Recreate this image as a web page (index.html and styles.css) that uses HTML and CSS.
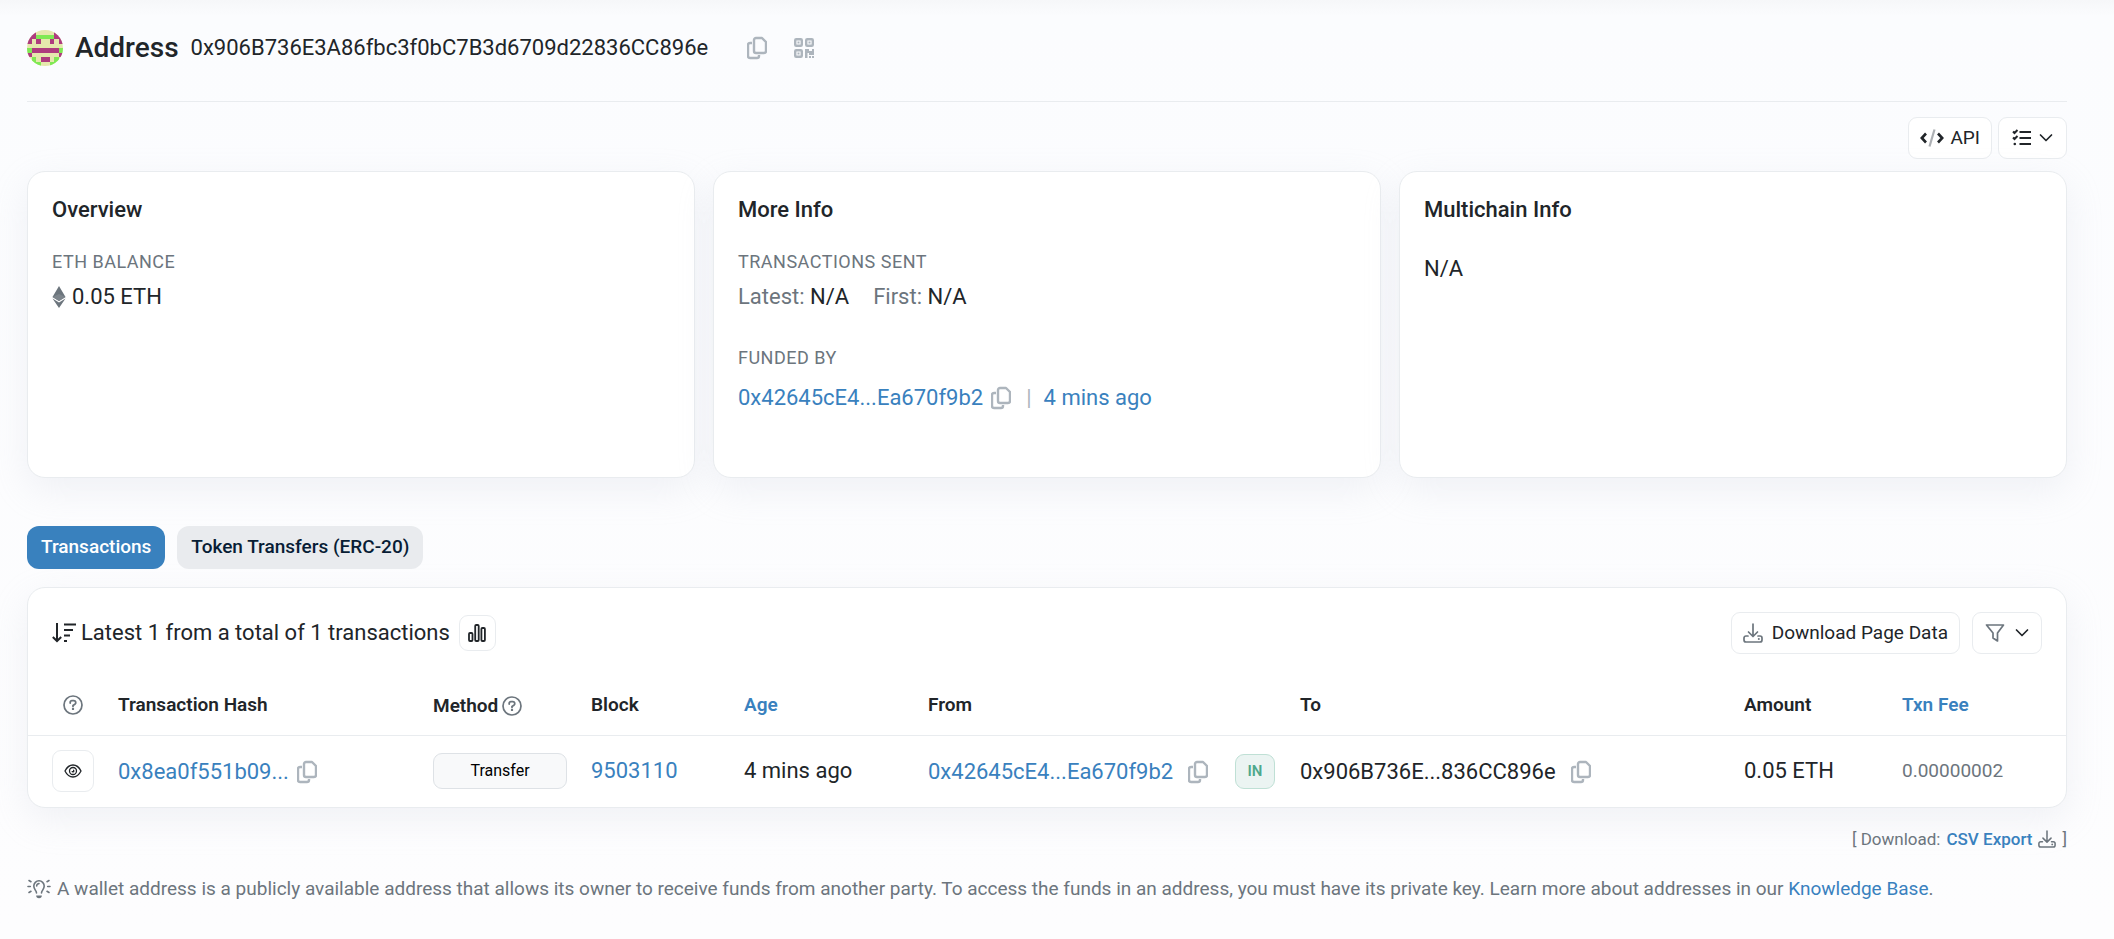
FILE: index.html
```html
<!DOCTYPE html>
<html lang="en">
<head>
<meta charset="utf-8">
<title>Address 0x906B736E3A86fbc3f0bC7B3d6709d22836CC896e</title>
<link rel="stylesheet" href="styles.css">
</head>
<body>
<svg class="sprite" aria-hidden="true">
  <symbol id="copy" viewBox="0 0 20 24"><g fill="none" stroke="currentColor" stroke-width="2.4" stroke-linejoin="round"><path d="M9 2h6l4 4v9a2 2 0 0 1-2 2H9a2 2 0 0 1-2-2V4a2 2 0 0 1 2-2z"/><path d="M5 7H3a2 2 0 0 0-2 2v11a2 2 0 0 0 2 2h7a2 2 0 0 0 2-2v-1"/></g></symbol>
  <symbol id="help" viewBox="0 0 20 20"><circle cx="10" cy="10" r="9" fill="none" stroke="currentColor" stroke-width="1.7"/><path d="M7.2 8V7.4A1.7 1.7 0 0 1 8.9 5.700h2A1.900 1.900 0 0 1 11.900 9.200L10 10.400v1" fill="none" stroke="currentColor" stroke-width="1.8" stroke-linecap="round"/><circle cx="10" cy="13.900" r="1.200" fill="currentColor"/></symbol>
  <symbol id="download" viewBox="0 0 20 20"><g fill="none" stroke="currentColor" stroke-width="1.7" stroke-linecap="round" stroke-linejoin="round"><path d="M10 1v12M5.500 9l4.500 4.500L14.500 9"/><path d="M5 13H3a2 2 0 0 0-2 2v2a2 2 0 0 0 2 2h14a2 2 0 0 0 2-2v-2a2 2 0 0 0-2-2h-2"/></g><circle cx="15.800" cy="16" r="1" fill="currentColor"/></symbol>
  <symbol id="chevron" viewBox="0 0 14 10"><path d="M1.500 2L7 7.500 12.500 2" fill="none" stroke="currentColor" stroke-width="1.700" stroke-linecap="round" stroke-linejoin="round"/></symbol>
</svg>
<main class="page">
  <header class="title-bar">
    <svg class="avatar" viewBox="0 0 8 8" shape-rendering="crispEdges" aria-hidden="true">
      <path fill="#e5e8ad" d="M0 0h8v8H0z"/>
      <path fill="#ae3c7e" d="M1 0h1v1H1zM6 0h1v1H6zM0 1h2v1H0zM6 1h2v1H6zM0 2h1v1H0zM2 2h1v1H2zM5 2h1v1H5zM7 2h1v1H7zM1 4h6v1H1zM0 5h1v1H0zM7 5h1v1H7zM3 6h2v1H3z"/>
      <path fill="#7fe954" d="M2 1h4v1H2zM0 4h1v1H0zM7 4h1v1H7zM1 6h1v1H1zM6 6h1v1H6zM1 7h2v1H1zM5 7h2v1H5z"/>
    </svg>
    <h1>Address</h1>
    <span class="address">0x906B736E3A86fbc3f0bC7B3d6709d22836CC896e</span>
    <button class="icon-button" aria-label="Copy address"><svg class="copy"><use href="#copy"/></svg></button>
    <button class="icon-button" aria-label="Show QR code"><svg class="qr" viewBox="0 0 20 20"><g fill="none" stroke="currentColor" stroke-width="2.400"><rect x="1.200" y="1.200" width="6.600" height="6.600" rx="1"/><rect x="12.200" y="1.200" width="6.600" height="6.600" rx="1"/><rect x="1.200" y="12.200" width="6.600" height="6.600" rx="1"/></g><path fill="currentColor" d="M3.500 3.500h2v2h-2zM14.500 3.500h2v2h-2zM3.500 14.500h2v2h-2zM11 11h4v2h3v-2h2v6h-5v-2h-1.500v5H11zM15 18h2v2h-2zM18 18h2v2h-2z"/></svg></button>
  </header>

  <div class="toolbar">
    <a class="button api-button" href="#api"><svg class="code" viewBox="0 0 24 20"><path d="M6 5.500L1.800 10 6 14.500M18 5.500l4.200 4.500-4.200 4.500" fill="none" stroke="currentColor" stroke-width="2.600"/><path d="M14.500 1.500l-5 17" stroke="#adb0b4" stroke-width="2.200"/></svg>API</a>
    <button class="button list-button" aria-label="More options"><svg class="list" viewBox="0 0 20 18"><path d="M7.500 3H19M7.500 9H19M7.500 15H19M1 2.500L2.500 4l3-3M1 8.500L2.500 10l3-3" fill="none" stroke="currentColor" stroke-width="2"/><circle cx="2.800" cy="15" r="1.300" fill="currentColor"/></svg><svg class="chevron"><use href="#chevron"/></svg></button>
  </div>

  <section class="cards">
    <article class="card info">
      <h2>Overview</h2>
      <h3>ETH Balance</h3>
      <p class="value"><svg class="eth" viewBox="0 0 14 22"><path fill="#6c757d" d="M7 0l6.500 11L7 15 .5 11zM.500 12.600L7 16.500l6.500-3.900L7 22z"/><path fill="#7d858c" d="M7 8l6.500 3L7 15 .5 11z"/></svg>0.05 ETH</p>
    </article>
    <article class="card info">
      <h2>More Info</h2>
      <h3>Transactions Sent</h3>
      <p class="value sent"><span><span class="muted">Latest:</span> N/A</span><span><span class="muted">First:</span> N/A</span></p>
      <h3 class="funded-title">Funded By</h3>
      <p class="value funded"><a href="#funder">0x42645cE4...Ea670f9b2</a><button class="icon-button" aria-label="Copy funder address"><svg class="copy"><use href="#copy"/></svg></button><span class="bar">|</span><a href="#funding-tx">4 mins ago</a></p>
    </article>
    <article class="card info">
      <h2>Multichain Info</h2>
      <p class="value multichain">N/A</p>
    </article>
  </section>

  <nav class="tabs">
    <button class="tab active">Transactions</button>
    <button class="tab">Token Transfers (ERC-20)</button>
  </nav>

  <section class="card transactions">
    <div class="list-head">
      <svg class="sort" viewBox="0 0 24 20"><path d="M5 0v18M.800 14l4.200 4 4.200-4M12 1.500h12M12 7h9M12 12.500h6M12 18h3" fill="none" stroke="currentColor" stroke-width="2"/></svg>
      <p>Latest 1 from a total of 1 transactions</p>
      <button class="button chart-button" aria-label="Show chart"><svg class="bars" viewBox="0 0 18 18"><g fill="none" stroke="currentColor" stroke-width="1.800"><rect x="1" y="9" width="3.500" height="8" rx="1"/><rect x="7.200" y="1" width="3.500" height="16" rx="1"/><rect x="13.400" y="4" width="3.500" height="13" rx="1"/></g></svg></button>
      <button class="button download-button"><svg class="download"><use href="#download"/></svg>Download Page Data</button>
      <button class="button filter-button" aria-label="Filter"><svg class="filter" viewBox="0 0 20 18"><path d="M1.500 1h17L12.500 9v8L8 14V9z" fill="none" stroke="currentColor" stroke-width="1.700" stroke-linejoin="round"/></svg><svg class="chevron"><use href="#chevron"/></svg></button>
    </div>
    <table>
      <colgroup><col class="c-eye"><col class="c-hash"><col class="c-method"><col class="c-block"><col class="c-age"><col class="c-from"><col class="c-dir"><col class="c-to"><col class="c-amount"><col class="c-fee"></colgroup>
      <thead><tr>
        <th class="eye-cell"><svg class="help"><use href="#help"/></svg></th><th>Transaction Hash</th><th><span class="inline">Method<svg class="help"><use href="#help"/></svg></span></th><th>Block</th><th><a href="#age">Age</a></th><th>From</th><th></th><th>To</th><th>Amount</th><th><a href="#fee">Txn Fee</a></th>
      </tr></thead>
      <tbody><tr>
        <td class="eye-cell"><button class="button eye-button" aria-label="Preview transaction"><svg class="eye" viewBox="0 0 18 16"><g fill="none" stroke="currentColor" stroke-width="1.300"><path d="M1 8c2-4 4.800-6 8-6s6 2 8 6c-2 4-4.800 6-8 6s-6-2-8-6z"/><circle cx="9" cy="8" r="3.500"/></g><path d="M9 6.500a1.500 1.500 0 1 1-1.500 1.500h1.500z" fill="currentColor"/></svg></button></td>
        <td><span class="inline hash"><a href="#tx">0x8ea0f551b09...</a><button class="icon-button" aria-label="Copy hash"><svg class="copy"><use href="#copy"/></svg></button></span></td>
        <td><span class="method">Transfer</span></td>
        <td><a href="#block">9503110</a></td>
        <td>4 mins ago</td>
        <td><span class="inline wide"><a href="#from">0x42645cE4...Ea670f9b2</a><button class="icon-button" aria-label="Copy sender"><svg class="copy"><use href="#copy"/></svg></button></span></td>
        <td><span class="direction">IN</span></td>
        <td><span class="inline wide">0x906B736E...836CC896e<button class="icon-button" aria-label="Copy recipient"><svg class="copy"><use href="#copy"/></svg></button></span></td>
        <td>0.05 ETH</td>
        <td class="fee">0.00000002</td>
      </tr></tbody>
    </table>
  </section>

  <p class="export">[ Download: <a href="#csv">CSV Export</a> <svg class="download"><use href="#download"/></svg> ]</p>
  <footer class="note">
    <svg class="bulb" viewBox="0 0 24 20"><g fill="none" stroke="currentColor" stroke-width="1.600" stroke-linecap="round"><path d="M9.500 14c0-2.500-2.700-3.500-2.700-7a5.200 5.200 0 0 1 10.400 0c0 3.500-2.700 4.500-2.700 7M9.700 7A2.300 2.300 0 0 1 12 4.600M1 7.500h2.300M20.700 7.500H23M2 1.500l2 1.200M22 1.500l-2 1.200M2 13.500l2-1.200M22 13.500l-2-1.200"/></g><path d="M9.200 16.500h5.600a2.800 2.800 0 0 1-5.600 0z" fill="currentColor"/></svg>
    <p>A wallet address is a publicly available address that allows its owner to receive funds from another party. To access the funds in an address, you must have its private key. Learn more about addresses in our <a href="#kb">Knowledge Base</a>.</p>
  </footer>
</main>
</body>
</html>
```

FILE: styles.css
```css
* { box-sizing: border-box; }
body {
  margin: 0;
  background: #fdfdfe linear-gradient(#f6f7f9, #fbfcfe 16px, #fdfdfe) no-repeat;
  color: #212529;
  font: 22px/32px Roboto, "Liberation Sans", sans-serif;
}
h1, h2, h3, p { margin: 0; }
a { color: #3981be; text-decoration: none; }
button { font: inherit; color: inherit; cursor: pointer; }
svg { display: block; flex: none; }
.sprite { display: none; }
.page { padding: 0 47px 0 27px; }

.title-bar { display: flex; align-items: center; height: 102px; padding-bottom: 6px; border-bottom: 1px solid #e9ecef; }
.avatar { width: 36px; height: 36px; margin-right: 12px; border-radius: 50%; }
h1 { margin-right: 12px; font-size: 28px; font-weight: 500; }
.address { margin-right: 12px; }
.icon-button { display: inline-flex; padding: 0; border: 0; background: none; color: #adb5bd; }
.title-bar .icon-button { margin-left: 27px; }
.copy { width: 20px; height: 24px; }
.qr { width: 20px; height: 20px; }

.toolbar { display: flex; justify-content: flex-end; gap: 6px; margin: 15px 0 12px; }
.button { display: inline-flex; align-items: center; justify-content: center; height: 42px; padding: 0 12px; border: 1px solid #e9ecef; border-radius: 9px; background: #fff; color: #212529; font-size: 19px; }
.api-button { padding: 0 11px; }
.code { width: 24px; height: 20px; margin-right: 6px; }
.list { width: 20px; height: 18px; margin-right: 7px; }
.chevron { width: 14px; height: 10px; }
.list-button { padding: 0 13px; }

.card { border: 1px solid #e9ecef; border-radius: 18px; background: #fff; box-shadow: 0 12px 36px rgba(189, 197, 209, 0.2); }
.cards { display: grid; grid-template-columns: repeat(3, 1fr); gap: 18px; }
.info { min-height: 307px; padding: 22px 24px; }
h2 { font-size: 22px; font-weight: 500; }
h3 { margin-top: 22px; font-size: 18px; line-height: 28px; font-weight: 400; letter-spacing: 0.5px; text-transform: uppercase; color: #6c757d; }
.value { display: flex; align-items: center; margin-top: 5px; }
.eth { width: 14px; height: 22px; margin-right: 6px; }
.muted { color: #6c757d; }
.sent { gap: 24px; }
.funded-title { margin-top: 31px; }
.funded { margin-top: 10px; }
.funded .copy { margin: 0 15px 0 8px; }
.bar { margin-right: 12px; color: #adb5bd; }
.multichain { margin-top: 27px; }

.tabs { display: flex; gap: 12px; margin: 48px 0 18px; }
.tab { height: 43px; padding: 0 14px 1px; border: 0; border-radius: 12px; background: #e9ebee; color: #081d35; font-size: 19px; font-weight: 500; }
.tab.active { background: #3981be; color: #fff; }

.list-head { display: flex; align-items: center; padding: 24px 24px 0; }
.sort { width: 24px; height: 20px; margin-right: 5px; }
.chart-button { width: 37px; height: 36px; margin: 0 auto 0 9px; padding: 0; }
.bars { width: 18px; height: 18px; }
.download { width: 20px; height: 20px; color: #6c757d; }
.download-button { padding: 0 11px; }
.download-button .download { margin-right: 9px; }
.filter { width: 20px; height: 18px; margin-right: 10px; color: #6c757d; }
.filter-button { margin-left: 12px; }

table { width: 100%; border-collapse: collapse; table-layout: fixed; }
th, td { padding: 0; text-align: left; white-space: nowrap; }
th { height: 81px; padding-top: 22px; border-bottom: 1px solid #e9ecef; font-size: 19px; font-weight: 600; }
td { height: 72px; }
.c-eye { width: 90px; }
.c-hash { width: 315px; }
.c-method { width: 158px; }
.c-block { width: 153px; }
.c-age { width: 184px; }
.c-from { width: 307px; }
.c-dir { width: 65px; }
.c-amount { width: 158px; }
.c-fee { width: 164px; }
.eye-cell { padding-left: 24px; }
.eye-cell .help { margin-left: 11px; }
.eye-button { width: 42px; padding: 0; }
.eye { width: 18px; height: 16px; }
.help { width: 20px; height: 20px; color: #6c757d; }
.inline { display: inline-flex; align-items: center; gap: 4px; vertical-align: middle; }
.hash { gap: 8px; }
.wide { gap: 15px; }
.method { display: block; width: 134px; border: 1px solid #dee2e6; border-radius: 9px; background: #f8f9fa; color: #000; font-size: 16px; line-height: 34px; text-align: center; }
.direction { display: block; width: 40px; border: 1px solid #bfe0d5; border-radius: 9px; background: #ebf4f2; color: #4fa88c; font-size: 15px; font-weight: 600; line-height: 33px; text-align: center; }
.fee { color: #6c757d; font-size: 19px; }

.export { display: flex; align-items: center; justify-content: flex-end; gap: 6px; margin-top: 15px; color: #6c757d; font-size: 17px; }
.export a { font-weight: 500; }
.export .download { width: 18px; height: 18px; }
.note { display: flex; align-items: center; gap: 6px; margin-top: 18px; padding-bottom: 32px; color: #6c757d; font-size: 19px; }
.bulb { width: 24px; height: 20px; }
```
